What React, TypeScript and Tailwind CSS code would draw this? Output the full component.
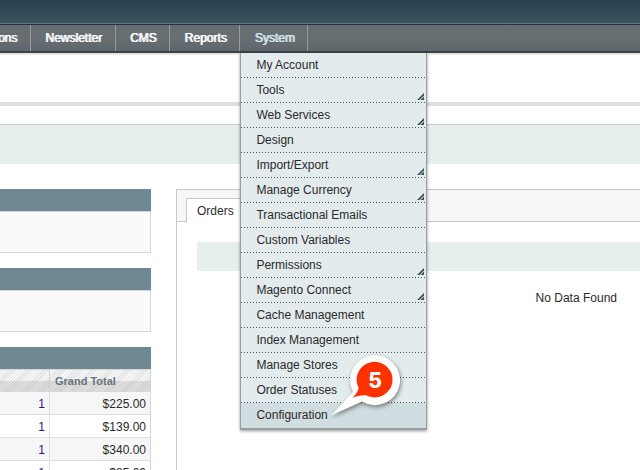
const menu: { label: string; sub?: boolean }[] = [
  { label: "My Account" },
  { label: "Tools", sub: true },
  { label: "Web Services", sub: true },
  { label: "Design" },
  { label: "Import/Export", sub: true },
  { label: "Manage Currency", sub: true },
  { label: "Transactional Emails" },
  { label: "Custom Variables" },
  { label: "Permissions", sub: true },
  { label: "Magento Connect", sub: true },
  { label: "Cache Management" },
  { label: "Index Management" },
  { label: "Manage Stores" },
  { label: "Order Statuses" },
  { label: "Configuration" },
];

const orders = [
  { items: 1, total: "$225.00" },
  { items: 1, total: "$139.00" },
  { items: 1, total: "$340.00" },
  { items: 1, total: "$85.00" },
];

const navLink =
  "flex h-full items-center pl-[14px] pr-[13px] text-white [text-shadow:1px_0_0_currentColor]";
const navItem = "h-[26px] shrink-0 border-r border-[#959b9f]";

function SubmenuMark() {
  return (
    <svg
      className="absolute right-[2px] bottom-[3px] h-[7px] w-[7px]"
      viewBox="0 0 7 7"
      aria-hidden="true"
    >
      <path d="M0 7 7 0V2.500L2.500 7Z" fill="#3d515b" />
      <path d="M3.500 7 7 3.500V7Z" fill="#3d515b" />
    </svg>
  );
}

function StepBadge() {
  return (
    <svg
      className="pointer-events-none absolute right-[18px] bottom-0 h-[80px] w-[84px]"
      viewBox="324 348 84 80"
      role="img"
      aria-label="Step 5"
    >
      <g className="drop-shadow-[1px_2px_2px_rgba(0,0,0,0.45)]">
        <path d="M331 415.500 353 392A25 25 0 1 1 362 401.500Z" fill="#fff" />
      </g>
      <path
        d="M352.500 398C356 394 358 391.500 358.700 388A18 17.800 0 1 1 366 395.300C361 395 357 396 352.500 398Z"
        fill="#fb3200"
      />
      <text
        x="375"
        y="388"
        textAnchor="middle"
        className="fill-white font-['Inter',sans-serif] text-[21px] font-extrabold"
      >
        5
      </text>
    </svg>
  );
}

function SystemMenu() {
  return (
    <div className="absolute top-[28px] left-0 z-10 w-[187px] border-x border-b-2 border-[#979da0] bg-[#e3ebed] shadow-[0_1px_3px_rgba(0,0,0,0.4)]">
      <ul>
        {menu.map((item) => (
          <li
            key={item.label}
            className="group relative flex h-[25px] flex-col last:bg-[#d1dee1]"
          >
            <a href="#" className="flex h-[24px] items-center pl-[15px] text-[#2a2a2a]">
              {item.label}
            </a>
            <span className="h-px bg-[repeating-linear-gradient(90deg,#4c5c63_0_1px,transparent_1px_3px)] group-last:bg-none" />
            {item.sub && <SubmenuMark />}
          </li>
        ))}
      </ul>
      <StepBadge />
    </div>
  );
}

function EmptyPanel() {
  return (
    <section>
      <div className="h-[22px] bg-[#6f8992]" />
      <div className="h-[42px] border border-l-0 border-[#d6d6d6] bg-[#fafafa]" />
    </section>
  );
}

export default function App() {
  return (
    <div className="h-screen overflow-hidden bg-white font-['Liberation_Sans',Arial,sans-serif] text-[12px] leading-[16px] text-[#2a2a2a]">
      <header className="h-[25px] border-b border-[#26353c] bg-linear-to-b from-[#28424f] to-[#3a5660]">
        <div className="h-[24px] border-b border-[#5a757c]" />
      </header>
      <nav className="h-[28px] border-b-2 border-[#394449] bg-linear-to-b from-[#666d71] via-[#686f73] to-[#5f666b]">
        <ul className="flex">
          <li className={navItem}>
            <a
              href="#"
              className="flex h-full w-[30px] items-center justify-end pr-[13px] text-white [text-shadow:1px_0_0_currentColor]"
            >
              ons
            </a>
          </li>
          <li className={navItem}>
            <a href="#" className={navLink}>Newsletter</a>
          </li>
          <li className={navItem}>
            <a href="#" className={navLink}>CMS</a>
          </li>
          <li className={navItem}>
            <a href="#" className={navLink}>Reports</a>
          </li>
          <li className={`relative ${navItem}`}>
            <a
              href="#"
              className="flex h-full items-center pl-[14px] pr-[13px] text-[#d5e4ea] [text-shadow:1px_0_0_currentColor]"
            >
              System
            </a>
            <SystemMenu />
          </li>
        </ul>
      </nav>
      <div className="h-[53px] border-t-2 border-b-4 border-t-[#e6e6e6] border-b-[#dfdfdf]" />
      <main className="pt-[18px]">
        <div className="h-[40px] border-t border-[#c8c8c8] bg-[#e6eeee]" />
        <div className="flex gap-[25px] pt-[25px]">
          <div className="flex w-[151px] shrink-0 flex-col gap-[15px]">
            <EmptyPanel />
            <EmptyPanel />
            <section>
              <div className="h-[22px] bg-[#6f8992]" />
              <table className="w-full table-fixed border-separate border-spacing-0 border-t border-r border-[#d6d6d6]">
                <thead>
                  <tr className="h-[22px] bg-[repeating-linear-gradient(135deg,transparent_0_1px,rgba(180,180,180,0.35)_1px_2px),linear-gradient(#fafafa_50%,#e0e0e0_50%)] text-[11px] text-[#67767e]">
                    <th className="w-[50px] border-r border-[#c9cfd1] p-0" />
                    <th className="p-0 pl-[5px] text-left font-bold">Grand Total</th>
                  </tr>
                </thead>
                <tbody>
                  {orders.map((order) => (
                    <tr key={order.total} className="h-[23px] odd:bg-[#f6f6f6]">
                      <td className="border-r border-b border-[#dadfe0] p-0 pr-[4px] pt-px text-right text-[#1b1b8c]">
                        {order.items}
                      </td>
                      <td className="border-b border-[#dadfe0] p-0 pr-[4px] pt-px text-right">
                        {order.total}
                      </td>
                    </tr>
                  ))}
                </tbody>
              </table>
            </section>
          </div>
          <section className="h-[320px] flex-1 border-t border-l border-[#c8c8c8]">
            <div className="flex h-[32px] items-end border-b border-[#c8c8c8] bg-[#f7f7f7] pl-[9px]">
              <a
                href="#"
                className="-mb-px flex h-[24px] w-[100px] items-center border border-b-0 border-[#c8c8c8] bg-white pl-[10px]"
              >
                Orders
              </a>
            </div>
            <div className="pt-[20px] pl-[20px]">
              <div className="h-[29px] bg-[#e6eeee]" />
              <p className="pt-[19px] pr-[23px] text-right">No Data Found</p>
            </div>
          </section>
        </div>
      </main>
    </div>
  );
}
